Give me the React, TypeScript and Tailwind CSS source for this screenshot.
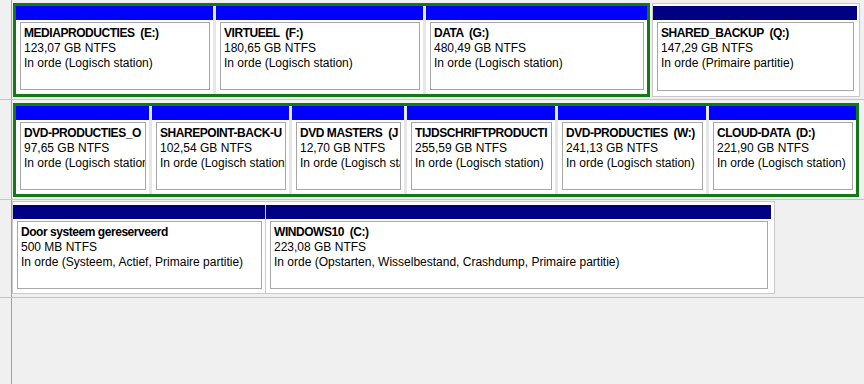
import React from "react";

type Part = {
  title: string;
  size: string;
  status: string;
  w: string;
  bar: string;
};

const BLUE = "bg-[#0000ff]";
const NAVY = "bg-[#000080]";

function Body({ p }: { p: Part }) {
  return (
    <div className="flex-1 min-h-0 flex bg-white pt-[2px] pr-[3px] pb-[4px] pl-[4px]">
      <div className="flex-1 min-w-0 overflow-hidden whitespace-pre border border-[#a7a7a7] bg-white pl-[3px] pt-[3px] text-[12px] leading-[15px] text-black">
        <div className="font-bold tracking-[-0.45px] overflow-hidden">{p.title}</div>
        <div className="overflow-hidden">{p.size}</div>
        <div className="overflow-hidden">{p.status}</div>
      </div>
    </div>
  );
}

function Partition({ p }: { p: Part }) {
  return (
    <div className={`${p.w} shrink-0 flex flex-col h-full`}>
      <div className={`h-[14px] shrink-0 ${p.bar}`} />
      <Body p={p} />
    </div>
  );
}

const row1: Part[] = [
  { title: "MEDIAPRODUCTIES  (E:)", size: "123,07 GB NTFS", status: "In orde (Logisch station)", w: "w-[197px]", bar: BLUE },
  { title: "VIRTUEEL  (F:)", size: "180,65 GB NTFS", status: "In orde (Logisch station)", w: "w-[207px]", bar: BLUE },
  { title: "DATA  (G:)", size: "480,49 GB NTFS", status: "In orde (Logisch station)", w: "w-[221px]", bar: BLUE },
];

const shared: Part = {
  title: "SHARED_BACKUP  (Q:)",
  size: "147,29 GB NTFS",
  status: "In orde (Primaire partitie)",
  w: "w-[204px]",
  bar: NAVY,
};

const row2: Part[] = [
  { title: "DVD-PRODUCTIES_O", size: "97,65 GB NTFS", status: "In orde (Logisch station)", w: "w-[133px]", bar: BLUE },
  { title: "SHAREPOINT-BACK-U", size: "102,54 GB NTFS", status: "In orde (Logisch station)", w: "w-[137px]", bar: BLUE },
  { title: "DVD MASTERS  (J", size: "12,70 GB NTFS", status: "In orde (Logisch station)", w: "w-[112px]", bar: BLUE },
  { title: "TIJDSCHRIFTPRODUCTI", size: "255,59 GB NTFS", status: "In orde (Logisch station)", w: "w-[148px]", bar: BLUE },
  { title: "DVD-PRODUCTIES  (W:)", size: "241,13 GB NTFS", status: "In orde (Logisch station)", w: "w-[148px]", bar: BLUE },
  { title: "CLOUD-DATA  (D:)", size: "221,90 GB NTFS", status: "In orde (Logisch station)", w: "w-[147px]", bar: BLUE },
];

const row3: Part[] = [
  { title: "Door systeem gereserveerd", size: "500 MB NTFS", status: "In orde (Systeem, Actief, Primaire partitie)", w: "w-[252px]", bar: NAVY },
  { title: "WINDOWS10  (C:)", size: "223,08 GB NTFS", status: "In orde (Opstarten, Wisselbestand, Crashdump, Primaire partitie)", w: "w-[505px]", bar: NAVY },
];

function LeftCell() {
  return <div className="w-[12px] shrink-0 border-r border-[#a0a0a0]" />;
}

export default function App() {
  return (
    <div className="w-[864px] h-[384px] bg-[#f0f0f0] flex flex-col overflow-hidden font-['Liberation_Sans',Arial,sans-serif]">
      {/* Row 1 */}
      <div className="h-[100px] shrink-0 flex border-b border-[#c4c4c4]">
        <LeftCell />
        <div className="flex-1 flex items-start pt-[3px] pl-[1px]">
          <div className="h-[94px] flex gap-[3px] border-[3px] border-[#127a12] bg-[#e6e6e6]">
            {row1.map((p) => (
              <Partition key={p.title} p={p} />
            ))}
          </div>
          <div className="ml-[2px] h-[94px] border border-[#c8c8c8] bg-white pt-[2px] pr-[2px] pb-[1px] flex">
            <Partition p={shared} />
          </div>
        </div>
      </div>

      {/* Row 2 */}
      <div className="h-[100px] shrink-0 flex border-b border-[#c4c4c4]">
        <LeftCell />
        <div className="flex-1 flex items-start pt-[3px] pl-[1px]">
          <div className="h-[94px] flex gap-[3px] border-[3px] border-[#127a12] bg-[#e6e6e6]">
            {row2.map((p) => (
              <Partition key={p.title} p={p} />
            ))}
          </div>
        </div>
      </div>

      {/* Row 3 */}
      <div className="h-[98px] shrink-0 flex border-b border-[#c4c4c4]">
        <LeftCell />
        <div className="flex-1 flex items-start pt-[1px]">
          <div className="h-[93px] flex border border-[#c8c8c8] bg-white pt-[3px] pr-[3px]">
            <Partition p={row3[0]} />
            <div className="w-[1px] bg-[#c8c8c8]" />
            <Partition p={row3[1]} />
          </div>
        </div>
      </div>

      {/* Filler */}
      <div className="flex-1 flex">
        <LeftCell />
        <div className="flex-1" />
      </div>
    </div>
  );
}
